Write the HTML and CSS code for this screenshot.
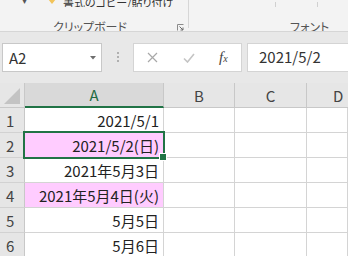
FILE: index.html
```html
<!DOCTYPE html>
<html lang="ja">
<head>
  <meta charset="UTF-8">
  <title>Excel</title>
  <link rel="stylesheet" href="styles.css">
</head>
<body>
  <div class="ribbon">
    <div class="group group-clip">
      <div class="group-top">
        <span class="drop-mark">▾</span>
        <svg class="brush" width="10" height="6" viewBox="0 0 10 6"><path d="M1 0 L9 0 L5 5 Z" fill="#f2c45a"/></svg>
        <span class="top-text">書式のコピー/貼り付け</span>
      </div>
      <div class="group-label">
        <span>クリップボード</span>
        <svg class="launcher" width="7" height="7" viewBox="0 0 7 7"><path d="M0.5 0.5 H6.5 M0.5 0.5 V6.5" stroke="#8a8a8a" fill="none"/><path d="M2.5 2.5 L6 6 M6 3.5 V6 H3.5" stroke="#6a6a6a" fill="none"/></svg>
      </div>
    </div>
    <div class="group group-font">
      <div class="group-top">
        <span class="tick tick1"></span>
        <span class="tick tick2"></span>
      </div>
      <div class="group-label font-label">フォント</div>
    </div>
  </div>

  <div class="fbar">
    <div class="namebox">
      <span>A2</span>
      <svg class="caret" width="6" height="4" viewBox="0 0 6 4"><path d="M0 0 H6 L3 3.5 Z" fill="#6e6e6e"/></svg>
    </div>
    <div class="grip"><i></i><i></i><i></i></div>
    <div class="fx-buttons">
      <svg class="btn-x" width="11" height="11" viewBox="0 0 11 11"><path d="M1 1 L10 10 M10 1 L1 10" stroke="#a8a8a8" stroke-width="1.2"/></svg>
      <svg class="btn-ok" width="12" height="10" viewBox="0 0 12 10"><path d="M1 5.5 L4.5 9 L11 1" stroke="#c4c4c4" stroke-width="1.6" fill="none"/></svg>
      <span class="fx">f<small>x</small></span>
    </div>
    <div class="formula">2021/5/2</div>
  </div>

  <div class="sheet">
    <div class="corner">
      <svg width="16" height="16" viewBox="0 0 16 16"><path d="M16 0 V16 H0 Z" fill="#c3c3c3"/></svg>
    </div>
    <div class="colhead active">A</div>
    <div class="colhead">B</div>
    <div class="colhead">C</div>
    <div class="colhead last">D</div>

    <div class="rowhead">1</div>
    <div class="cell">2021/5/1</div>
    <div class="cell"></div><div class="cell"></div><div class="cell"></div>

    <div class="rowhead">2</div>
    <div class="cell pink selected">2021/5/2(日)<span class="handle"></span></div>
    <div class="cell"></div><div class="cell"></div><div class="cell"></div>

    <div class="rowhead">3</div>
    <div class="cell">2021年5月3日</div>
    <div class="cell"></div><div class="cell"></div><div class="cell"></div>

    <div class="rowhead">4</div>
    <div class="cell pink">2021年5月4日(火)</div>
    <div class="cell"></div><div class="cell"></div><div class="cell"></div>

    <div class="rowhead">5</div>
    <div class="cell">5月5日</div>
    <div class="cell"></div><div class="cell"></div><div class="cell"></div>

    <div class="rowhead">6</div>
    <div class="cell">5月6日</div>
    <div class="cell"></div><div class="cell"></div><div class="cell"></div>
  </div>
</body>
</html>
```

FILE: styles.css
```css
body {
  margin: 0;
  width: 348px;
  height: 256px;
  overflow: hidden;
  background-color: #e8e8e8;
  font-family: "Noto Sans CJK JP", sans-serif;
  color: #222;
}

/* ribbon */
.ribbon {
  display: flex;
  height: 31px;
  background-color: #f3f3f3;
  border-bottom: 1px solid #d6d6d6;
  overflow: hidden;
}

.group {
  display: flex;
  flex-direction: column;
}

.group-clip {
  width: 188px;
  height: 28px;
  border-right: 1px solid #d6d6d6;
}

.group-font {
  flex: 1;
}

.group-top {
  display: flex;
  flex-shrink: 0;
  align-items: flex-end;
  height: 7px;
  overflow: hidden;
}

.drop-mark {
  margin-left: 22px;
  font-size: 10px;
  line-height: 10px;
  margin-bottom: 2px;
  color: #555;
}

.brush {
  margin-left: 20px;
  margin-bottom: 2px;
}

.top-text {
  margin-left: 6px;
  width: 110px;
  overflow: hidden;
  white-space: nowrap;
  font-size: 11px;
  line-height: 12px;
  margin-bottom: -1px;
  color: #333;
  font-feature-settings: "palt";
}

.group-label {
  display: flex;
  flex-shrink: 0;
  align-items: center;
  height: 21px;
  box-sizing: border-box;
  padding-top: 18px;
  padding-left: 53px;
  font-size: 12px;
  line-height: 12px;
  color: #555;
  font-feature-settings: "palt";
}

.launcher {
  margin-left: auto;
  margin-right: 4px;
  margin-top: 2px;
}

.tick {
  width: 1px;
  height: 5px;
  background-color: #d0d0d0;
}

.tick1 {
  margin-left: 86px;
}

.tick2 {
  margin-left: 41px;
}

.font-label {
  padding-left: 101px;
}

/* formula bar */
.fbar {
  display: flex;
  align-items: flex-start;
  height: 51px;
  padding-top: 11px;
  box-sizing: border-box;
}

.namebox {
  display: flex;
  align-items: center;
  margin-left: 2px;
  width: 100px;
  height: 29px;
  box-sizing: border-box;
  padding-left: 6px;
  background-color: #fff;
  border: 1px solid #c8c8c8;
  font-size: 15px;
  color: #333;
}

.caret {
  margin-left: auto;
  margin-right: 5px;
}

.grip {
  display: flex;
  flex-direction: column;
  gap: 2px;
  margin-left: 15px;
  margin-top: 9px;
  width: 2px;
}

.grip i {
  width: 2px;
  height: 2px;
  background-color: #b0b0b0;
}

.fx-buttons {
  display: flex;
  align-items: center;
  margin-left: 14px;
  width: 109px;
  height: 29px;
  box-sizing: border-box;
  background-color: #fff;
  border: 1px solid #d4d4d4;
}

.btn-x {
  margin-left: 13px;
}

.btn-ok {
  margin-left: 25px;
}

.fx {
  margin-left: 24px;
  font-family: "Liberation Serif", serif;
  font-style: italic;
  font-size: 15px;
  color: #444;
}

.fx small {
  font-size: 10px;
}

.formula {
  flex: 1;
  height: 29px;
  margin-left: 5px;
  padding-left: 11px;
  box-sizing: border-box;
  background-color: #fff;
  border: 1px solid #d4d4d4;
  border-right: none;
  font-size: 15px;
  line-height: 26px;
  color: #333;
}

/* sheet */
.sheet {
  display: grid;
  grid-template-columns: 25px 139px 71px 72px 1fr;
  grid-template-rows: 25px repeat(6, 25px);
  background-color: #fff;
}

.corner {
  display: flex;
  align-items: flex-end;
  justify-content: flex-end;
  padding: 0 4px 3px 0;
  background-color: #e6e6e6;
  border-right: 1px solid #c8c8c8;
  border-bottom: 1px solid #c8c8c8;
}

.colhead {
  display: flex;
  align-items: center;
  justify-content: center;
  background-color: #e6e6e6;
  border-right: 1px solid #c8c8c8;
  border-bottom: 1px solid #c8c8c8;
  font-size: 15px;
  color: #444;
}

.colhead.active {
  background-color: #d9d9d9;
  color: #1f6b43;
  border-bottom: 2px solid #217346;
}

.colhead.last {
  justify-content: flex-start;
  padding-left: 26px;
  border-right: none;
}

.rowhead {
  display: flex;
  align-items: center;
  padding-left: 6px;
  background-color: #e6e6e6;
  border-right: 1px solid #c8c8c8;
  border-bottom: 1px solid #d2d2d2;
  font-size: 15px;
  color: #444;
}

.cell {
  position: relative;
  display: flex;
  align-items: center;
  justify-content: flex-end;
  padding-right: 4px;
  border-right: 1px solid #d4d4d4;
  border-bottom: 1px solid #d4d4d4;
  font-size: 15px;
  color: #222;
  white-space: nowrap;
}

.pink {
  background-color: #ffccff;
}

.selected::after {
  content: "";
  position: absolute;
  top: -2px;
  left: -2px;
  right: -2px;
  bottom: -2px;
  border: 2px solid #217346;
}

.handle {
  position: absolute;
  right: -4px;
  bottom: -4px;
  width: 6px;
  height: 6px;
  background-color: #217346;
  border: 1px solid #fff;
  z-index: 2;
}
```
